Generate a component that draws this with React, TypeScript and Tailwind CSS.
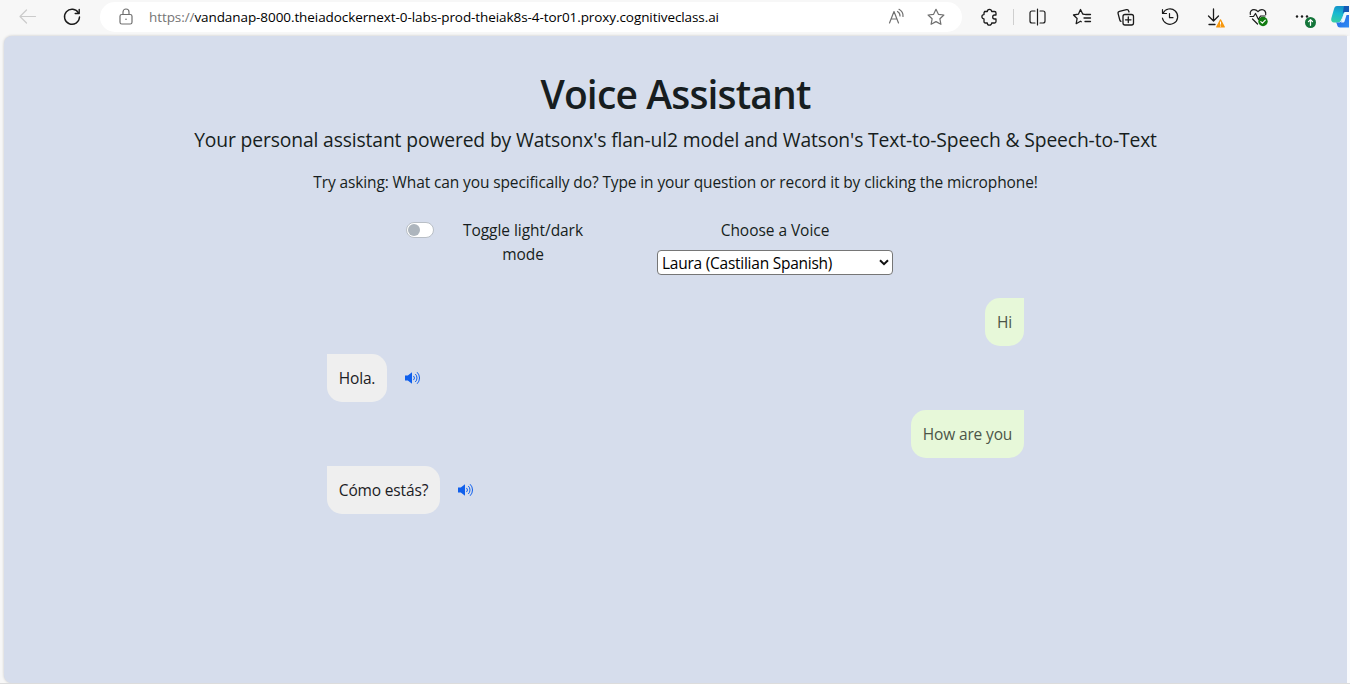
import React from "react";

type IconProps = { children: React.ReactNode; className?: string };

function Glyph({ children, className = "" }: IconProps) {
  return (
    <svg
      width="24"
      height="24"
      viewBox="0 0 24 24"
      fill="none"
      stroke="currentColor"
      strokeWidth="1.2"
      strokeLinecap="round"
      strokeLinejoin="round"
      className={`block shrink-0 ${className}`}
    >
      {children}
    </svg>
  );
}

function ToolCell({ children }: { children: React.ReactNode }) {
  return <button className="flex h-6 w-11 shrink-0 items-center justify-center text-[#1b1b1b]">{children}</button>;
}

function SpeakerIcon() {
  return (
    <svg width="16" height="14" viewBox="0 0 16 14" fill="none" stroke="currentColor" strokeWidth="1" strokeLinecap="round" className="block">
      <path d="M0 4.500h2.800L7 1.200v11.600L2.800 9.500H0z" fill="currentColor" stroke="none" />
      <path d="M8.800 5.200a2.600 2.600 0 0 1 0 3.600M10.600 3.300a5.200 5.200 0 0 1 0 7.400M12.400 1.500a7.800 7.800 0 0 1 0 11" />
    </svg>
  );
}

function CopilotLogo() {
  return (
    <svg width="18" height="24" viewBox="0 0 18 24" className="block shrink-0">
      <defs>
        <linearGradient id="cpA" x1="0.5" y1="0" x2="0.3" y2="1">
          <stop offset="0" stopColor="#1590c8" />
          <stop offset="0.45" stopColor="#18b8d2" />
          <stop offset="1" stopColor="#35cfa5" />
        </linearGradient>
        <linearGradient id="cpB" x1="0" y1="0" x2="1" y2="1">
          <stop offset="0" stopColor="#1f5fe0" />
          <stop offset="1" stopColor="#2f8df5" />
        </linearGradient>
      </defs>
      <path d="M6 1h12v5h-3.500L10 15c-.5 1.500-1.500 2.500-3 2.500H3C.5 17.500-.2 15.500.4 13L3 4c.5-2 1.300-3 3-3z" fill="url(#cpA)" />
      <path d="M13 1h5v6h-4c-1.300 0-2 .8-2.400 2z" fill="#1259b5" />
      <path d="M4.500 17.500H8c1.500 0 2.500-1 3-2.500l1.500-5H18v12.500H9c-2 0-2.500-1-3-3-.3-1.200-.7-2-1.500-2z" fill="url(#cpB)" />
      <path d="M14 7h2.500l-3 9.500c-.2.700-.6 1-1.200 1H10l2.200-7.500c.4-1.500.8-2.300 1.800-3z" fill="#e9f8ff" />
    </svg>
  );
}

function Toolbar() {
  return (
    <header className="flex h-[34px] w-full items-center overflow-hidden bg-[#f7f7f7]">
      <button className="ml-4 text-[#cbcbcb]">
        <Glyph><path d="M4 11.500h15.500M10.500 5L4 11.500l6.500 6.500" /></Glyph>
      </button>
      <button className="ml-5 text-[#1b1b1b]">
        <Glyph>
          <path d="M18.600 8.200A7.500 7.500 0 1 0 19.500 12" strokeWidth="1.400" />
          <path d="M19.200 4.500v4h-4" strokeWidth="1.400" />
        </Glyph>
      </button>
      <div className="ml-4 flex h-[30px] w-[862px] shrink-0 items-center rounded-full bg-white text-[#707070]">
        <Glyph className="ml-3.5">
          <rect x="6" y="9.500" width="12" height="9.500" rx="1.800" />
          <path d="M9 9.500V7a3 3 0 0 1 6 0v2.500" />
          <circle cx="12" cy="14.300" r="0.800" fill="currentColor" stroke="none" />
        </Glyph>
        <span className="ml-[11px] whitespace-nowrap text-[13.500px] leading-5 tracking-[-0.080px] text-black">
          <span className="text-[#757575]">https://</span>vandanap-8000.theiadockernext-0-labs-prod-theiak8s-4-tor01.proxy.cognitiveclass.ai
        </span>
        <Glyph className="ml-auto">
          <path d="M5.500 18L10 6.500 14.500 18M7.200 14h5.600" />
          <path d="M13.500 6.500a5 5 0 0 1 2.500 4.500M15 4.300a7.500 7.500 0 0 1 4 7.200" />
        </Glyph>
        <Glyph className="ml-4 mr-3.5">
          <path d="M12 4.300l2.400 5 5.500.7-4 3.800 1 5.500-4.900-2.700-4.900 2.700 1-5.500-4-3.800 5.500-.7z" />
        </Glyph>
      </div>
      <div className="ml-[5px] flex items-center">
        <ToolCell>
          <Glyph>
            <path d="M7.500 6.500h2.800a2.200 2.200 0 0 1 4.400 0h2.800c1 0 1.500.5 1.500 1.500v2h-1.300a2 2 0 0 0 0 4H19v2.500c0 1-.5 1.500-1.500 1.500h-2.800a2.200 2.200 0 0 1-4.400 0H8.500c-1 0-1.500-.5-1.500-1.500v-2.700a2.100 2.100 0 0 1 0-4.200V8c0-1 .5-1.500 1.500-1.500" strokeWidth="1.300" />
          </Glyph>
        </ToolCell>
        <div className="mx-0.5 h-4 w-px bg-[#cfcfcf]" />
        <ToolCell>
          <Glyph>
            <path d="M11.500 4v16M9 6H6C4.800 6 4 6.800 4 8v8c0 1.200.8 2 2 2h3M14 6h3c1.200 0 2 .8 2 2v8c0 1.200-.8 2-2 2h-3" strokeWidth="1.200" />
          </Glyph>
        </ToolCell>
        <ToolCell>
          <Glyph>
            <path d="M14.500 9.300l-1.800-.3-2.200-4.500-2.100 4.700-4.900.8 3.600 3.500-.9 5.200 4.300-2.500.8.500M15.500 9.500h5M14 13h6.500M15 16.500h5.500" strokeWidth="1.300" />
          </Glyph>
        </ToolCell>
        <ToolCell>
          <Glyph>
            <rect x="9" y="9.500" width="10.500" height="10.500" rx="2" strokeWidth="1.300" />
            <path d="M14.300 12v5.500M11.500 14.800H17M15 7l-.3-1c-.3-1.100-1-1.600-2.200-1.300L5.500 6.400c-1.200.3-1.700 1-1.400 2.200L5.800 15c.2.800.6 1.200 1.200 1.400" strokeWidth="1.300" />
          </Glyph>
        </ToolCell>
        <ToolCell>
          <Glyph>
            <path d="M5 8.300A7.700 7.700 0 1 1 4.400 13M4.500 4.500v4h4M11.500 8.500v4.200h3.500" strokeWidth="1.200" />
          </Glyph>
        </ToolCell>
        <ToolCell>
          <Glyph>
            <path d="M11.500 4v11.500M6.500 11l5 5 5-5M7 19.500h6" strokeWidth="1.300" />
            <path d="M18.500 14.800l3.800 7.200h-7.600z" fill="#f7980e" stroke="#f7980e" />
            <path d="M18.500 17v2.200M18.500 21v.1" stroke="#fff" strokeWidth="1" />
          </Glyph>
        </ToolCell>
        <ToolCell>
          <Glyph>
            <path d="M4.300 9.500C3.700 6.500 5.700 4.700 8 4.700c1.700 0 3 .8 4 2 1-1.200 2.300-2 4-2 2.300 0 4.200 1.800 3.700 5M4 11.500h3.500l2-3 3 6 2-3.500H19M6.500 14l5 5" strokeWidth="1.200" />
            <circle cx="17" cy="16.500" r="4.700" fill="#107c10" stroke="none" />
            <path d="M14.800 16.600l1.600 1.600 2.900-3" stroke="#fff" strokeWidth="1.200" />
          </Glyph>
        </ToolCell>
        <ToolCell>
          <Glyph className="overflow-visible">
            <g fill="currentColor" stroke="none">
              <circle cx="7" cy="11.500" r="1.200" />
              <circle cx="12" cy="11.500" r="1.200" />
              <circle cx="17" cy="11.500" r="1.200" />
            </g>
            <circle cx="20.500" cy="17.500" r="5.500" fill="#14753a" stroke="none" />
            <path d="M20.500 20.300v-5.500M18.500 16.600l2-2 2 2" stroke="#fff" strokeWidth="1.300" />
          </Glyph>
        </ToolCell>
      </div>
      <div className="ml-[7px] shrink-0"><CopilotLogo /></div>
    </header>
  );
}

type Message = { from: "user" | "bot"; text: string; width: string };

const messages: Message[] = [
  { from: "user", text: "Hi", width: "w-[39px]" },
  { from: "bot", text: "Hola.", width: "w-[60px]" },
  { from: "user", text: "How are you", width: "w-[113px]" },
  { from: "bot", text: "Cómo estás?", width: "w-[113px]" },
];

function Bubble({ message }: { message: Message }) {
  const base = "flex h-12 items-center justify-center whitespace-nowrap text-[15.500px] leading-6 tracking-[-0.150px]";
  if (message.from === "user") {
    return (
      <div className="flex justify-end">
        <div className={`${base} ${message.width} rounded-[15px] rounded-tr-none bg-[#e7f8d9] text-[#4c5548]`}>{message.text}</div>
      </div>
    );
  }
  return (
    <div className="flex items-center">
      <div className={`${base} ${message.width} rounded-[15px] rounded-tl-none bg-[#efefef] text-[#1b2024]`}>{message.text}</div>
      <button className="ml-[18px] text-[#0f5fec]" aria-label="Play">
        <SpeakerIcon />
      </button>
    </div>
  );
}

export default function App() {
  return (
    <div className="flex h-[684px] w-[1350px] flex-col overflow-hidden bg-[#f7f7f7] font-['Open_Sans','Noto_Sans',sans-serif]">
      <Toolbar />
      <div className="mt-0.5 flex h-[647px] pl-[4px]">
        <main className="flex w-[1343px] flex-col items-center rounded-l-[8px] bg-[#d6ddec] pt-[34px] text-[#171d20] shadow-[0_0_3px_rgba(0,0,0,0.2)]">
          <h1 className="whitespace-nowrap text-[39px] font-[560] leading-[48px] tracking-[-0.850px]">Voice Assistant</h1>
          <p className="mt-2 whitespace-nowrap text-[19.300px] leading-7 tracking-[-0.130px]">
            Your personal assistant powered by Watsonx's flan-ul2 model and Watson's Text-to-Speech &amp; Speech-to-Text
          </p>
          <p className="mt-4 whitespace-nowrap text-[15.500px] leading-6 tracking-[-0.120px]">
            Try asking: What can you specifically do? Type in your question or record it by clicking the microphone!
          </p>
          <div className="mt-6 flex w-[539px] text-[15.500px] leading-6 tracking-[-0.050px]">
            <button className="mt-1 flex h-4 w-7 items-center rounded-full border border-[#b9bfc6] bg-white pl-px" role="switch" aria-checked="false">
              <span className="block size-3 rounded-full bg-[#adb5bd]" />
            </button>
            <div className="ml-6 w-[130px] text-center">Toggle light/dark mode</div>
            <div className="ml-[69px] flex w-[236px] flex-col items-center">
              <div>Choose a Voice</div>
              <button className="mt-2 flex h-[25px] w-[236px] items-center justify-between rounded-[4px] border border-[#767676] bg-white pl-1 pr-[3px] text-black">
                <span className="pt-px tracking-[-0.250px]">Laura (Castilian Spanish)</span>
                <svg width="10" height="7" viewBox="0 0 10 7" fill="none" stroke="#111" strokeWidth="2">
                  <path d="M1 1.200l4 4 4-4" />
                </svg>
              </button>
            </div>
          </div>
          <section className="mt-[23px] flex w-[697px] flex-col gap-2">
            {messages.map((m) => (
              <Bubble key={m.text} message={m} />
            ))}
          </section>
        </main>
        <div className="w-[3px] bg-[#fafbfd]" />
      </div>
      <div className="h-px bg-[#dcdcdc]" />
    </div>
  );
}
